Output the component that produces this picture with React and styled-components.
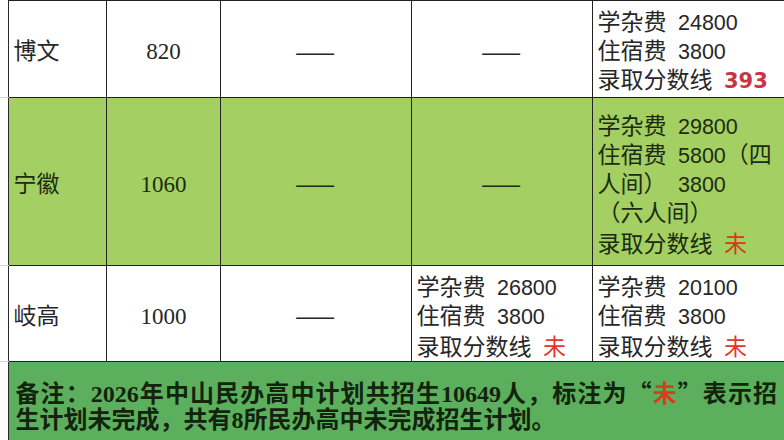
import React from "react";
import styled, { createGlobalStyle } from "styled-components";

const Global = createGlobalStyle`
  html, body { margin: 0; padding: 0; background: #ffffff; overflow: hidden; }
  body { width: 784px; height: 440px; font-family: "Noto Sans CJK SC", sans-serif; }
`;

const Table = styled.table`
  border-collapse: collapse;
  table-layout: fixed;
  width: 787px;
  font-family: "Liberation Sans", "Noto Sans CJK SC", sans-serif;
  font-size: 23px;
  line-height: 29px;
  color: #272727;
`;

const Col = styled.col`
  width: ${(p) => p.$w}px;
`;

const Row = styled.tr`
  height: ${(p) => p.$h}px;
  background: ${(p) => (p.$green ? "#a3cf63" : "#ffffff")};
  color: ${(p) => (p.$green ? "#1d2b12" : "#272727")};
`;

const Gutter = styled.td`
  padding: 0;
  background: #ffffff;
  border-right: 1px solid #2a2a2a;
  border-bottom: 1px solid ${(p) => (p.$last ? "#ffffff" : "#d4d4d4")};
`;

const Cell = styled.td`
  padding: 5px 4px 0 5px;
  border: 1px solid #222222;
  vertical-align: middle;
  text-align: ${(p) => p.$align || "left"};
  font-family: ${(p) =>
    p.$serif
      ? '"Liberation Serif", "Noto Sans CJK SC", serif'
      : '"Liberation Sans", "Noto Sans CJK SC", sans-serif'};
  white-space: nowrap;
  overflow: hidden;
`;

const Dash = styled.span`
  font-family: "Noto Sans CJK SC", sans-serif;
  font-weight: 400;
  font-size: 24px;
  letter-spacing: 2px;
`;

const Line = styled.div`
  display: block;
  height: 29px;
`;

const Num = styled.span`
  font-size: 21.5px;
`;

const Score = styled.span`
  font-family: "DejaVu Sans", sans-serif;
  font-weight: 700;
  font-size: 21px;
  color: #c93445;
`;

const Mark = styled.span`
  font-family: "Noto Sans CJK SC", sans-serif;
  color: ${(p) => p.$tone || "#e2372a"};
`;

const Quote = styled.span`
  font-family: "Noto Sans CJK SC", sans-serif;
`;

const Note = styled.td`
  padding: 16px 10px 20px 7px;
  background: #5cb05d;
  border-top: 1px solid #222222;
  border-left: 1px solid #2a2a2a;
  font-family: "Liberation Serif", "Noto Sans CJK SC", serif;
  font-weight: 700;
  font-size: 24px;
  line-height: 28px;
  color: #13240e;
`;

const NoteLine = styled.div`
  height: 28px;
  text-align: left;
  text-align-last: ${(p) => (p.$justify ? "justify" : "auto")};
  white-space: nowrap;
`;

const SP = "\u2002";

function Fees({ tuition, board, score }) {
  return (
    <>
      <Line>
        学杂费{SP}
        <Num>{tuition}</Num>
      </Line>
      <Line>
        住宿费{SP}
        <Num>{board}</Num>
      </Line>
      <Line>
        录取分数线{SP}
        {score}
      </Line>
    </>
  );
}

export default function App() {
  return (
    <>
      <Global />
      <Table>
        <colgroup>
          <Col $w={8} />
          <Col $w={98} />
          <Col $w={114} />
          <Col $w={191} />
          <Col $w={181} />
          <Col $w={195} />
        </colgroup>
        <tbody>
          <Row $h={97}>
            <Gutter />
            <Cell>博文</Cell>
            <Cell $align="center" $serif>
              820
            </Cell>
            <Cell $align="center">
              <Dash>——</Dash>
            </Cell>
            <Cell $align="center">
              <Dash>——</Dash>
            </Cell>
            <Cell>
              <Fees tuition="24800" board="3800" score={<Score>393</Score>} />
            </Cell>
          </Row>
          <Row $h={168} $green>
            <Gutter />
            <Cell>宁徽</Cell>
            <Cell $align="center" $serif>
              1060
            </Cell>
            <Cell $align="center">
              <Dash>——</Dash>
            </Cell>
            <Cell $align="center">
              <Dash>——</Dash>
            </Cell>
            <Cell>
              <Line>
                学杂费{SP}
                <Num>29800</Num>
              </Line>
              <Line>
                住宿费{SP}
                <Num>5800</Num>（四
              </Line>
              <Line>
                人间）{SP}
                <Num>3800</Num>
              </Line>
              <Line>（六人间）</Line>
              <Line>
                录取分数线{SP}
                <Mark $tone="#d8381c">未</Mark>
              </Line>
            </Cell>
          </Row>
          <Row $h={96}>
            <Gutter />
            <Cell>岐高</Cell>
            <Cell $align="center" $serif>
              1000
            </Cell>
            <Cell $align="center">
              <Dash>——</Dash>
            </Cell>
            <Cell>
              <Fees tuition="26800" board="3800" score={<Mark>未</Mark>} />
            </Cell>
            <Cell>
              <Fees tuition="20100" board="3800" score={<Mark>未</Mark>} />
            </Cell>
          </Row>
          <Row>
            <Gutter $last />
            <Note colSpan={5}>
              <NoteLine $justify>
                备注：2026年中山民办高中计划共招生10649人，标注为<Quote>“</Quote>
                <Mark $tone="#d2401e">未</Mark>
                <Quote>”</Quote>表示招
              </NoteLine>
              <NoteLine>生计划未完成，共有8所民办高中未完成招生计划。</NoteLine>
            </Note>
          </Row>
        </tbody>
      </Table>
    </>
  );
}
